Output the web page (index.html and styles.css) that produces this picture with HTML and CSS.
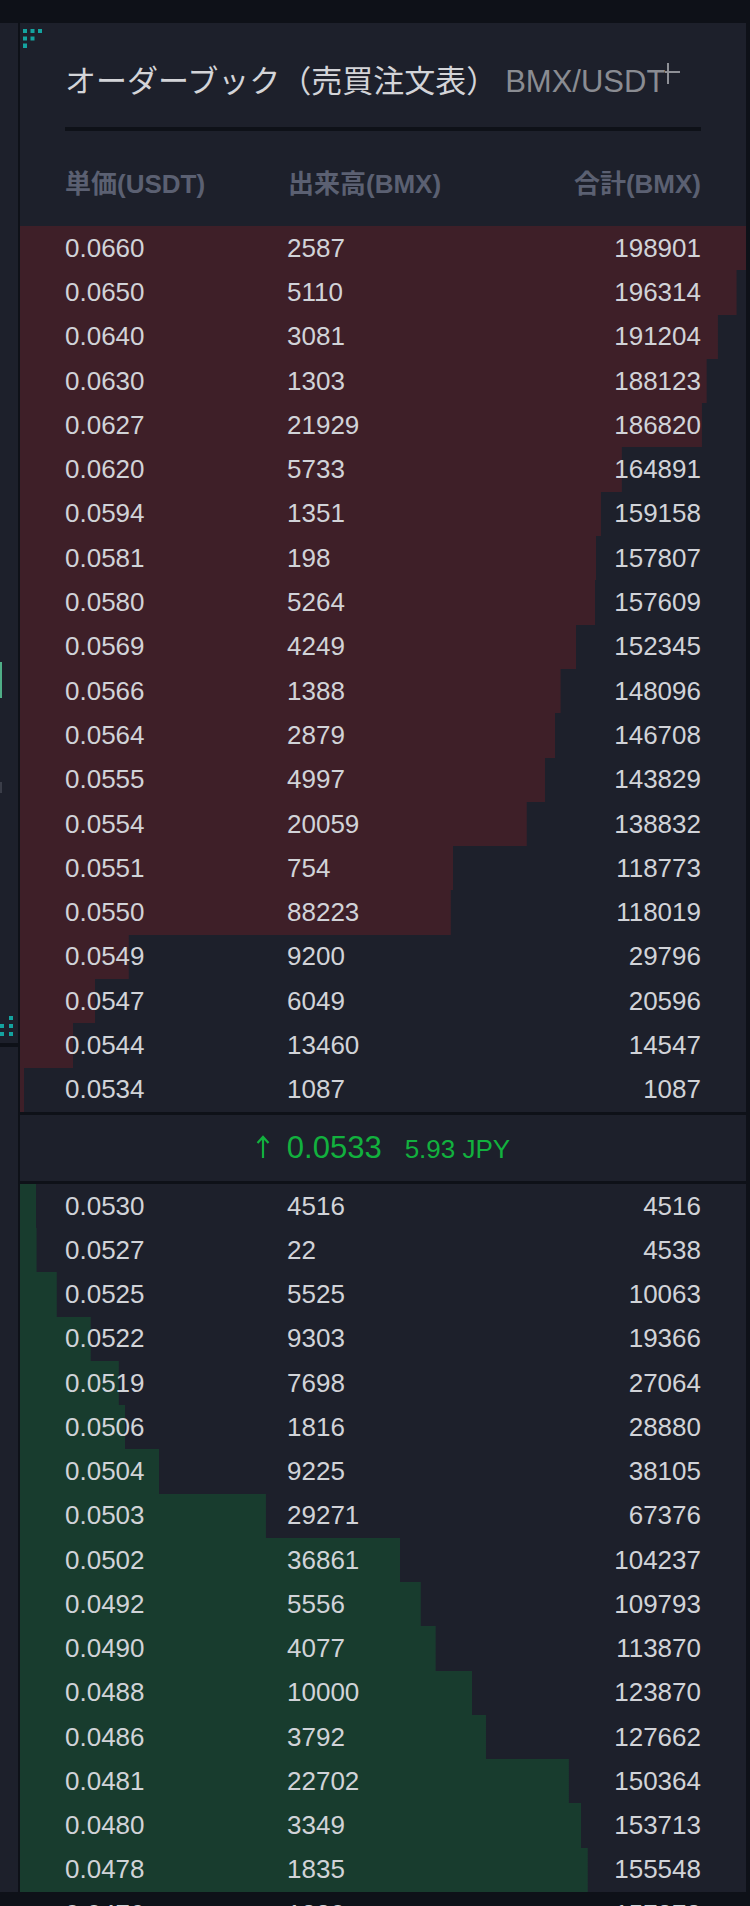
FILE: index.html
```html
<!DOCTYPE html>
<html lang="ja">
<head>
    <meta charset="UTF-8">
    <meta name="viewport" content="width=device-width, initial-scale=1.0">
    <title>Order Book BMX/USDT</title>
    <link rel="stylesheet" href="styles.css">
</head>
<body>
    <div class="topbar"></div>
    <div class="workspace">
        <div class="side">
            <div class="side-panel side-top">
                <div class="mark mark-green"></div>
                <div class="mark mark-gray"></div>
                <svg class="handle-br" width="14" height="20" viewBox="0 0 14 20">
                    <rect x="9" y="0" width="4" height="4"/>
                    <rect x="0" y="8" width="4" height="4"/>
                    <rect x="9" y="8" width="4" height="4"/>
                    <rect x="0" y="16" width="4" height="4"/>
                    <rect x="9" y="16" width="4" height="4"/>
                </svg>
            </div>
            <div class="side-panel side-bottom"></div>
        </div>

        <div class="panel">
            <svg class="handle-tl" width="19" height="19" viewBox="0 0 19 19">
                <rect x="0" y="0" width="4" height="4"/>
                <rect x="7.5" y="0" width="4" height="4"/>
                <rect x="15" y="0" width="4" height="4"/>
                <rect x="0" y="7.5" width="4" height="4"/>
                <rect x="7.5" y="7.5" width="4" height="4"/>
                <rect x="0" y="14.5" width="4" height="4.5"/>
            </svg>
            <div class="panel-title">
                <span class="title-ja">オーダーブック（売買注文表）</span><span class="title-pair">BMX/USDT</span><svg class="cursor" width="15" height="21" viewBox="0 0 15 21"><rect x="2" y="0" width="2" height="21"/><rect x="0" y="8" width="15" height="2"/></svg>
            </div>
            <div class="divider"></div>
            <div class="book-head">
                <span>単価(USDT)</span>
                <span>出来高(BMX)</span>
                <span class="total">合計(BMX)</span>
            </div>
            <div id="asks" class="book-list"></div>
            <div class="last-price">
                <svg class="arrow" width="14" height="23" viewBox="0 0 14 23">
                    <path d="M7 2 V23 M1.5 8 L7 2 L12.5 8"/>
                </svg>
                <span class="price">0.0533</span>
                <span class="jpy">5.93 JPY</span>
            </div>
            <div id="bids" class="book-list"></div>
        </div>
    </div>

    <script>
        var MAX_TOTAL = 198901;

        var asks = [
            ['0.0660', 2587, 198901], ['0.0650', 5110, 196314], ['0.0640', 3081, 191204],
            ['0.0630', 1303, 188123], ['0.0627', 21929, 186820], ['0.0620', 5733, 164891],
            ['0.0594', 1351, 159158], ['0.0581', 198, 157807], ['0.0580', 5264, 157609],
            ['0.0569', 4249, 152345], ['0.0566', 1388, 148096], ['0.0564', 2879, 146708],
            ['0.0555', 4997, 143829], ['0.0554', 20059, 138832], ['0.0551', 754, 118773],
            ['0.0550', 88223, 118019], ['0.0549', 9200, 29796], ['0.0547', 6049, 20596],
            ['0.0544', 13460, 14547], ['0.0534', 1087, 1087]
        ];

        var bids = [
            ['0.0530', 4516, 4516], ['0.0527', 22, 4538], ['0.0525', 5525, 10063],
            ['0.0522', 9303, 19366], ['0.0519', 7698, 27064], ['0.0506', 1816, 28880],
            ['0.0504', 9225, 38105], ['0.0503', 29271, 67376], ['0.0502', 36861, 104237],
            ['0.0492', 5556, 109793], ['0.0490', 4077, 113870], ['0.0488', 10000, 123870],
            ['0.0486', 3792, 127662], ['0.0481', 22702, 150364], ['0.0480', 3349, 153713],
            ['0.0478', 1835, 155548], ['0.0476', 1830, 157378]
        ];

        function bookRow(r, side) {
            var w = (r[2] / MAX_TOTAL * 100).toFixed(2);
            return '<div class="book-row ' + side + '" style="--w: ' + w + '%">' +
                '<span>' + r[0] + '</span><span>' + r[1] + '</span>' +
                '<span class="total">' + r[2] + '</span></div>';
        }

        var html = '';
        for (let i = 0; i < asks.length; i++) {
            html += bookRow(asks[i], 'ask');
        }
        document.getElementById('asks').innerHTML = html;

        html = '';
        for (let i = 0; i < bids.length; i++) {
            // the last row is already below the panel edge
            html += bookRow(bids[i], i < 16 ? 'bid' : 'off');
        }
        document.getElementById('bids').innerHTML = html;
    </script>
</body>
</html>
```

FILE: styles.css
```css
html, body {
    margin: 0;
    padding: 0;
}
body {
    background-color: #0e1118;
    width: 750px;
    height: 1906px;
    overflow: hidden;
    font-family: "Liberation Sans", "Noto Sans CJK JP", sans-serif;
    color: #d1d3d8;
}
.topbar {
    height: 23px;
}
.workspace {
    display: flex;
    height: 1869px;
}
.side {
    width: 18px;
    margin-right: 2px;
    display: flex;
    flex-direction: column;
    gap: 4px;
}
.side-panel {
    background-color: #1d202b;
}
.side-top {
    height: 1020px;
    display: flex;
    flex-direction: column;
}
.side-bottom {
    flex: 1;
}
.mark {
    width: 2px;
}
.mark-green {
    margin-top: 639px;
    height: 36px;
    background-color: #4fae87;
}
.mark-gray {
    margin-top: 84px;
    height: 11px;
    background-color: #3a3d48;
}
.handle-br {
    margin-top: 223px;
    fill: #14a39f;
}
.panel {
    position: relative;
    width: 726px;
    margin-right: 4px;
    background-color: #1d202b;
    padding-top: 36px;
    box-sizing: border-box;
}
.handle-tl {
    position: absolute;
    left: 3px;
    top: 6px;
    fill: #14a39f;
}
.panel-title {
    padding: 0 45px;
    height: 40px;
    line-height: 40px;
    white-space: nowrap;
}
.title-ja {
    font-family: "Noto Sans CJK JP", sans-serif;
    font-size: 31px;
    color: #d3d4d8;
}
.title-pair {
    margin-left: 8px;
    font-size: 31px;
    color: #8a8c92;
}
.cursor {
    vertical-align: top;
    margin-top: 4px;
    fill: #8e9096;
}
.divider {
    margin: 28px 45px 0;
    height: 4px;
    background-color: #0e1118;
}
.book-head {
    display: grid;
    grid-template-columns: 223px 1fr auto;
    padding: 38px 45px 27px;
    line-height: 30px;
    font-size: 26px;
    font-weight: bold;
    color: #5b6072;
}
.book-row {
    display: grid;
    grid-template-columns: 222px 1fr auto;
    align-items: center;
    height: 44.3px;
    padding: 0 45px;
    font-size: 26px;
    background-repeat: no-repeat;
    background-size: var(--w) 100%;
}
#bids .book-row {
    height: 44.25px;
}
.book-row.ask {
    background-image: linear-gradient(#3e1f28, #3e1f28);
}
.book-row.bid {
    background-image: linear-gradient(#183c2e, #183c2e);
}
.total {
    text-align: right;
}
.last-price {
    display: flex;
    justify-content: center;
    align-items: baseline;
    height: 66px;
    line-height: 66px;
    border-top: 3px solid #0e1118;
    border-bottom: 3px solid #0e1118;
    color: #12b13e;
}
.arrow {
    margin-right: 17px;
    fill: none;
    stroke: #12b13e;
    stroke-width: 2.2;
}
.price {
    font-size: 31px;
}
.jpy {
    font-size: 26px;
    margin-left: 23px;
}
```
